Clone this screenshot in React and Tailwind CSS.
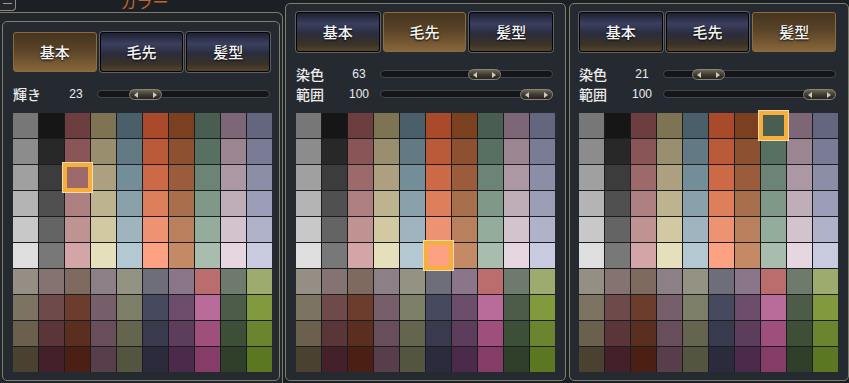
import { memo } from 'react';

const COLORS = [
  ['#777777', '#161616', '#6d3e3f', '#7e7353', '#4b5f6a', '#a94a2a', '#7b401f', '#495e51', '#7d6675', '#646680'],
  ['#8c8c8c', '#282828', '#8a5556', '#998f6e', '#637a85', '#bb5a38', '#8d5030', '#587062', '#9a8590', '#7a7c96'],
  ['#a0a0a0', '#3c3c3c', '#9d6a6b', '#aca081', '#738d99', '#cc6a47', '#9a5c3a', '#6b8476', '#ab98a4', '#8c8ea7'],
  ['#b4b4b4', '#505050', '#ad7f80', '#bdb38f', '#8aa0ab', '#dd7f5a', '#a86f4c', '#7f9888', '#bfadb8', '#9c9eb7'],
  ['#c8c8c8', '#646464', '#c09393', '#d2c9a3', '#9fb4bf', '#ee9372', '#b8805c', '#93ac9b', '#d2c3cd', '#b0b2c9'],
  ['#dedede', '#787878', '#d4a5a6', '#e6dfbc', '#b4c8d2', '#fca283', '#c48a66', '#a8bdae', '#e5d6df', '#c8cbe0'],
  ['#948e84', '#857371', '#7f6a60', '#8c7f85', '#949282', '#6d6e7a', '#8b7689', '#bb6d6d', '#6e7a6c', '#9dab6f'],
  ['#7d7363', '#6f4a4a', '#6c3d2d', '#765f6a', '#7c7e67', '#474a5f', '#6c4d6b', '#b96c99', '#4d5c48', '#819a3e'],
  ['#6b5f4e', '#5a3639', '#5a2f20', '#674e5a', '#65654f', '#3a3a4e', '#5d3d5c', '#9e4f7b', '#3e4f38', '#6b8430'],
  ['#4b4130', '#44212a', '#4c1f15', '#573e4a', '#545541', '#2c2b3e', '#4b2a4b', '#853c66', '#2f3f2a', '#5c7722'],
];

const TABS = ['基本', '毛先', '髪型'];

function TabButton({ label, active }) {
  return (
    <button
      className={
        active
          ? 'flex h-[40px] flex-1 items-center justify-center rounded-[3px] border border-[#8d6b3d] bg-[linear-gradient(180deg,#46341f_0%,#5a4428_45%,#87663b_100%)] text-[15px] font-medium text-[#f4f4f4] [text-shadow:0_1px_2px_#000]'
          : 'flex h-[40px] flex-1 items-center justify-center rounded-[3px] border border-[#050505] bg-[linear-gradient(180deg,#1d2032_0%,#3a3f5e_28%,#2b2d3d_55%,#3a3227_82%,#54442d_100%)] text-[15px] font-medium text-[#f4f4f4] shadow-[0_0_0_1px_#5f6063] [text-shadow:0_1px_2px_#000]'
      }
    >
      {label}
    </button>
  );
}

function Slider({ label, value }) {
  return (
    <div className="flex h-[20px] items-center">
      <span className="w-[50px] text-[14px] font-medium text-[#ececec]">{label}</span>
      <span className="w-[26px] text-center font-['Liberation_Sans',sans-serif] text-[12px] text-[#ececec]">
        {value}
      </span>
      <div className="relative ml-[8px] mr-[2px] flex h-[12px] flex-1 items-center">
        <div className="h-[8px] w-full rounded-full border border-[#44484e] bg-[#131518]" />
        <div
          className="absolute top-[1px] flex h-[11px] w-[33px] items-center justify-between rounded-full border border-[#8a8476] bg-[linear-gradient(180deg,#6e6757_0%,#3d382f_55%,#26231e_100%)] px-[4px]"
          style={{ left: `${(value / 100) * 140}px` }}
        >
          <svg width="4" height="6" viewBox="0 0 4 6">
            <path d="M4 0 L0 3 L4 6 Z" fill="#c9c9c9" />
          </svg>
          <svg width="4" height="6" viewBox="0 0 4 6">
            <path d="M0 0 L4 3 L0 6 Z" fill="#c9c9c9" />
          </svg>
        </div>
      </div>
    </div>
  );
}

function ColorGrid({ selected }) {
  return (
    <div className="mt-[9px] grid w-[259px] grid-cols-10 gap-px bg-[#1a1c1f]">
      {COLORS.flatMap((row, r) =>
        row.map((color, c) => (
          <div key={`${r}-${c}`} className="relative h-[25px]" style={{ backgroundColor: color }}>
            {selected[0] === r && selected[1] === c && (
              <div className="absolute -inset-[2px] z-10 border-[4px] border-[#f7ae3b] shadow-[0_0_0_1px_#f3dcae]" />
            )}
          </div>
        ))
      )}
    </div>
  );
}

function PanelBody({ active, sliders, selected }) {
  return (
    <div className="w-[259px]">
      <div className="flex w-[257px] gap-[3px]">
        {TABS.map((t, i) => (
          <TabButton key={t} label={t} active={i === active} />
        ))}
      </div>
      <div className="mt-[12px] flex flex-col">
        {sliders.map((s) => (
          <Slider key={s.label} label={s.label} value={s.value} />
        ))}
      </div>
      <ColorGrid selected={selected} />
    </div>
  );
}

export default function App() {
  return (
    <div className="flex h-[383px] w-[849px] overflow-hidden bg-[#1c2025] font-['Noto_Sans_CJK_JP',sans-serif]">
      <div className="flex w-[283px] shrink-0 flex-col">
        <div className="flex h-[12px] overflow-hidden">
          <div className="flex h-[11px] w-[16px] items-start justify-center rounded-br-[4px] border-b border-r border-[#8a8b7a] bg-[#23272c] pt-[3px]">
            <div className="h-px w-[9px] bg-[#9a9a9a]" />
          </div>
          <div className="flex flex-1 justify-center pr-[10px]">
            <span className="-mt-[7px] text-[16px] leading-[16px] text-[#c0672f]">カラー</span>
          </div>
        </div>
        <div className="flex-1 rounded-tr-[6px] border-r border-t border-[#7b7d6b] bg-[#22262b] pl-[2px] pr-[2px] pt-[8px]">
          <div className="h-[360px] rounded-[5px] border border-[#7d7f6d] bg-[#252a30] pl-[10px] pt-[10px]">
            <PanelBody active={0} sliders={[{ label: '輝き', value: 23 }]} selected={[2, 2]} />
          </div>
        </div>
      </div>

      <div className="ml-[2px] mt-[3px] h-[378px] w-[281px] shrink-0 rounded-[5px] border border-[#7d7f6d] bg-[#252a30] pl-[10px] pt-[8px]">
        <PanelBody
          active={1}
          sliders={[
            { label: '染色', value: 63 },
            { label: '範囲', value: 100 },
          ]}
          selected={[5, 5]}
        />
      </div>

      <div className="ml-[3px] mt-[3px] h-[378px] w-[280px] shrink-0 rounded-[5px] border border-[#7d7f6d] bg-[#252a30] pl-[9px] pt-[8px]">
        <PanelBody
          active={2}
          sliders={[
            { label: '染色', value: 21 },
            { label: '範囲', value: 100 },
          ]}
          selected={[0, 7]}
        />
      </div>
    </div>
  );
}
